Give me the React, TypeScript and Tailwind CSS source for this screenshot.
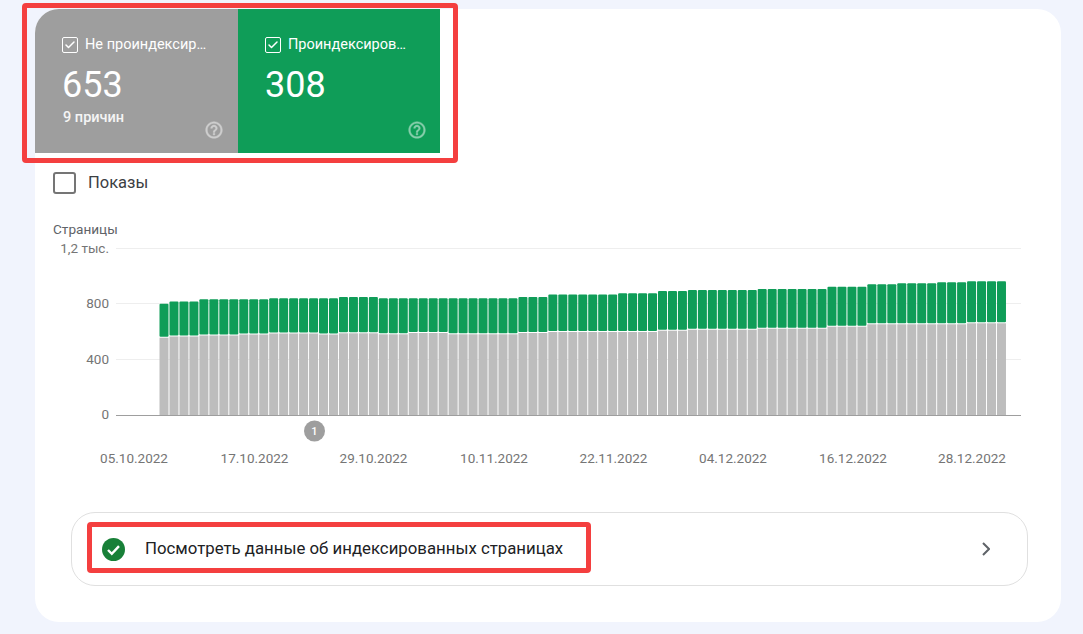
import { Check } from "lucide-react";

// [bars in run, y of green top, y of gray top]
const runs: [number, number, number][] = [
  [1, 303.7, 337.7],
  [3, 301.5, 336.5],
  [4, 299.3, 335.5],
  [3, 299.3, 334.5],
  [5, 298.3, 333.5],
  [2, 298.3, 334.5],
  [4, 297, 333.3],
  [3, 298.3, 334.3],
  [4, 298.3, 333],
  [7, 298.3, 334.3],
  [3, 297, 333],
  [7, 294.5, 332],
  [4, 293.3, 332],
  [3, 291, 330.7],
  [7, 290, 329.7],
  [2, 289, 328.7],
  [5, 289, 328.7],
  [4, 286.7, 326.7],
  [3, 284.3, 324.3],
  [4, 283.3, 324.3],
  [3, 282.3, 324.3],
  [4, 281.3, 323.3],
];

const bars = runs.flatMap(([count, top, mid]) => Array.from({ length: count }, () => ({ top, mid })));

const yLabels = [
  { y: 248, label: "1,2 тыс." },
  { y: 303, label: "800" },
  { y: 359, label: "400" },
];

const dates = [
  { x: 134, label: "05.10.2022" },
  { x: 254.5, label: "17.10.2022" },
  { x: 373.5, label: "29.10.2022" },
  { x: 494, label: "10.11.2022" },
  { x: 613.5, label: "22.11.2022" },
  { x: 733, label: "04.12.2022" },
  { x: 853, label: "16.12.2022" },
  { x: 972, label: "28.12.2022" },
];

function HelpIcon({ className }: { className: string }) {
  return (
    <svg viewBox="0 0 24 24" className={`absolute bottom-[13px] w-[20px] h-[20px] fill-white stroke-white stroke-[0.5] opacity-50 ${className}`}>
      <path d="M11 18h2v-2h-2v2zm1-16C6.48 2 2 6.48 2 12s4.48 10 10 10 10-4.48 10-10S17.52 2 12 2zm0 18c-4.41 0-8-3.59-8-8s3.59-8 8-8 8 3.59 8 8-3.59 8-8 8zm0-14c-2.21 0-4 1.79-4 4h2c0-1.1.9-2 2-2s2 .9 2 2c0 2-3 1.75-3 5h2c0-2.25 3-2.5 3-5 0-2.21-1.79-4-4-4z" />
    </svg>
  );
}

function Tile({ label, value, sub, className, helpClass }: { label: string; value: string; sub?: string; className: string; helpClass: string }) {
  return (
    <div className={`relative h-full pl-[27px] pt-[28px] text-white ${className}`}>
      <div className="flex items-center gap-[7px] h-[16px]">
        <span className="flex items-center justify-center shrink-0 w-[16px] h-[16px] border border-white rounded-[2px]">
          <Check className="w-[12px] h-[12px]" strokeWidth={3} />
        </span>
        <span className="truncate text-[14.5px] leading-[18px]">{label}</span>
      </div>
      <div className="mt-[11px] text-[36px] leading-[42px]">{value}</div>
      {sub && <div className="mt-[4px] pl-[1px] text-[14.5px] font-medium leading-[16px] text-white/90">{sub}</div>}
      <HelpIcon className={helpClass} />
    </div>
  );
}

function Chart() {
  return (
    <svg viewBox="35 237 1026 233" className="block w-[1026px] h-[233px]">
      {[248, 303, 359].map((y) => (
        <line key={y} x1={116} x2={1021} y1={y + 0.5} y2={y + 0.5} stroke="#eeeeee" />
      ))}
      {bars.map((b, i) => {
        const x = 159.5 + i * 9.97;
        return (
          <g key={i}>
            <rect x={x} y={b.top} width={9} height={b.mid - b.top - 1} rx={1} fill="#0f9d58" />
            <rect x={x} y={b.mid} width={9} height={415 - b.mid} fill="#bdbdbd" />
          </g>
        );
      })}
      <line x1={116} x2={1021} y1={415.5} y2={415.5} stroke="#9e9e9e" />
      {yLabels.map((l) => (
        <text key={l.label} x={109} y={l.y + 5} textAnchor="end" fontSize={13.5} fill="#757575">
          {l.label}
        </text>
      ))}
      <text x={109} y={419} textAnchor="end" fontSize={13.5} fill="#757575">
        0
      </text>
      <circle cx={314.5} cy={431} r={10.5} fill="#9e9e9e" />
      <text x={314.5} y={435} textAnchor="middle" fontSize={11} fontWeight={500} fill="#ffffff">
        1
      </text>
      {dates.map((d) => (
        <text key={d.label} x={d.x} y={463} textAnchor="middle" fontSize={13.5} fill="#757575">
          {d.label}
        </text>
      ))}
    </svg>
  );
}

export default function App() {
  return (
    <div className="h-[634px] overflow-hidden bg-[#f1f4fd] pt-[9px] pl-[35px] font-['Roboto',sans-serif]">
      <div className="w-[1026px] h-[613px] bg-white rounded-[24px]">
        {/* Summary tiles */}
        <div className="relative flex w-[405px] h-[144px]">
          <Tile
            label="Не проиндексированные"
            value="653"
            sub="9 причин"
            className="w-[203px] pr-[30px] bg-[#9e9e9e] rounded-tl-[24px]"
            helpClass="right-[14px]"
          />
          <Tile
            label="Проиндексированные"
            value="308"
            className="w-[202px] pr-[32px] bg-[#0f9d58]"
            helpClass="right-[13px]"
          />
          <div className="absolute -left-[13px] -top-[6px] w-[436px] h-[160px] border-[5px] border-[#f43f3f] rounded-[4px]" />
        </div>

        {/* Impressions toggle */}
        <div className="flex items-center gap-[12px] mt-[19px] ml-[18px] h-[22px]">
          <span className="w-[23px] h-[22px] border-2 border-[#757575] rounded-[3px]" />
          <span className="pt-[1px] text-[16.5px] text-[#3c4043]">Показы</span>
        </div>

        <div className="mt-[27px] ml-[18px] text-[13.6px] leading-[16px] text-[#5f6368]">Страницы</div>
        <Chart />

        {/* Link row */}
        <div className="relative flex items-center justify-between ml-[36px] mt-[42px] w-[957px] h-[74px] pl-[30px] pr-[37px] border border-[#e0e0e0] rounded-[24px]">
          <div className="flex items-center gap-[20px]">
            <svg viewBox="0 0 23 23" className="w-[23px] h-[23px]">
              <circle cx={11.5} cy={11.5} r={11.5} fill="#188038" />
              <path d="M6 12l3.8 3.8L17 8.2" fill="none" stroke="#ffffff" strokeWidth={2.4} />
            </svg>
            <span className="text-[16.8px] text-[#202124]">Посмотреть данные об индексированных страницах</span>
          </div>
          <svg viewBox="0 0 8 14" className="w-[8px] h-[14px]">
            <path d="M1 1l6 6-6 6" fill="none" stroke="#5f6368" strokeWidth={2} />
          </svg>
          <div className="absolute left-[15px] top-[9px] w-[504px] h-[51px] border-[5px] border-[#f43f3f] rounded-[4px]" />
        </div>
      </div>
    </div>
  );
}
